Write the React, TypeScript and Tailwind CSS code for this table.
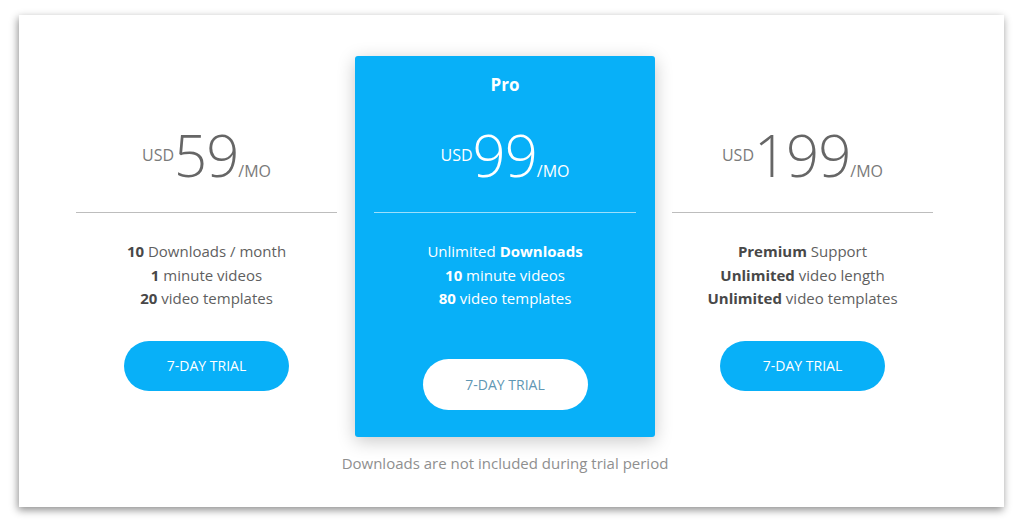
const plans = [
  {
    price: "59",
    features: [
      { b: "10", t: " Downloads / month" },
      { b: "1", t: " minute videos" },
      { b: "20", t: " video templates" },
    ],
  },
  {
    price: "199",
    features: [
      { b: "Premium", t: " Support" },
      { b: "Unlimited", t: " video length" },
      { b: "Unlimited", t: " video templates" },
    ],
  },
];

const font = { fontFamily: '"Open Sans", "Noto Sans", sans-serif' };

function Price({ value, light }: { value: string; light?: boolean }) {
  const small = light ? "text-white" : "text-[#7a7a7a]";
  const big = light ? "text-white" : "text-[#666]";
  return (
    <div className="flex h-[58px] items-baseline justify-center leading-none">
      <span className={`relative -top-[16px] text-[16px] ${small}`}>USD</span>
      <span className={`text-[58px] font-light tracking-[-1px] ${big}`}>{value}</span>
      <span className={`text-[16px] ${small}`}>/MO</span>
    </div>
  );
}

function SideColumn({ plan }: { plan: (typeof plans)[number] }) {
  return (
    <div className="flex w-[261px] flex-col items-center pt-[70px]">
      <Price value={plan.price} />
      <div className="mt-[28px] h-px w-full bg-[#bdbdbd]" />
      <ul className="mt-[27px] text-center text-[15px] leading-[23.5px] text-[#5f5f5f]">
        {plan.features.map((f, i) => (
          <li key={i}>
            <b className="font-bold text-[#484848]">{f.b}</b>
            {f.t}
          </li>
        ))}
      </ul>
      <button className="mt-[30px] h-[50px] w-[165px] rounded-full bg-[#08b0f8] text-[14px] text-white">
        7-DAY TRIAL
      </button>
    </div>
  );
}

export default function App() {
  return (
    <div className="h-[530px] w-[1024px] bg-white pl-[19px] pt-[15px]" style={font}>
      <div className="flex h-[492px] w-[985px] items-start bg-white pl-[57px] pt-[41px] shadow-[-1px_3px_8px_rgba(0,0,0,0.45)]">
        <SideColumn plan={plans[0]} />

        <div className="ml-[18px] flex w-[300px] flex-col items-center">
          <div className="flex h-[381px] w-full flex-col items-center rounded-[3px] bg-[#08b0f8] pt-[17px] shadow-[0_4px_18px_rgba(0,0,0,0.22)]">
            <h3 className="text-[17px] font-bold leading-[24px] text-white">Pro</h3>
            <div className="mt-[29px]">
              <Price value="99" light />
            </div>
            <div className="mt-[28px] h-px w-[262px] bg-white/60" />
            <ul className="mt-[27px] text-center text-[15px] leading-[23.5px] text-white">
              <li>
                Unlimited <b className="font-bold">Downloads</b>
              </li>
              <li>
                <b className="font-bold">10</b> minute videos
              </li>
              <li>
                <b className="font-bold">80</b> video templates
              </li>
            </ul>
            <button className="mt-[48px] h-[51px] w-[165px] rounded-full bg-white text-[14px] text-[#5f97b4]">
              7-DAY TRIAL
            </button>
          </div>
          <p className="mt-[16px] whitespace-nowrap text-[15px] leading-[20px] text-[#8f8f8f]">
            Downloads are not included during trial period
          </p>
        </div>

        <div className="ml-[17px]">
          <SideColumn plan={plans[1]} />
        </div>
      </div>
    </div>
  );
}
